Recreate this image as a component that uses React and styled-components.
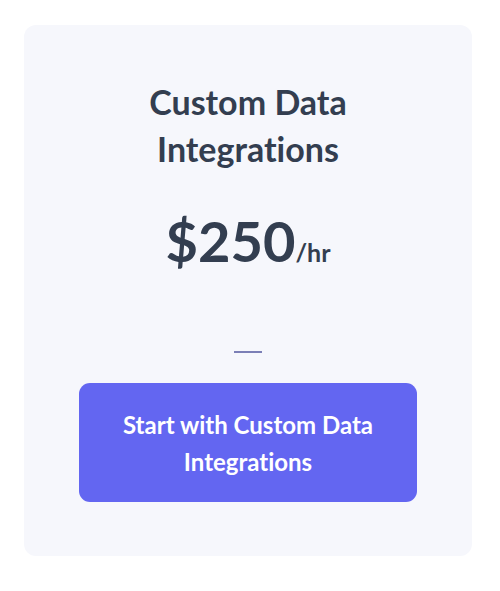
import styled, { createGlobalStyle } from "styled-components";

const Global = createGlobalStyle`
  body {
    margin: 0;
    background: #ffffff;
    font-family: Lato, "Noto Sans", sans-serif;
    font-variant-ligatures: none;
  }
`

const Page = styled.div`
  padding: 25px 28px 35px 24px;
`

const Card = styled.div`
  background: #f6f7fc;
  border-radius: 12px;
  height: 531px;
  box-sizing: border-box;
  padding: 53px 40px 0;
  display: flex;
  flex-direction: column;
  align-items: center;
`

const Title = styled.h2`
  margin: 0;
  font-size: 34px;
  line-height: 47px;
  font-weight: 700;
  color: #333e50;
  text-align: center;
`

const Price = styled.div`
  margin-top: 41px;
  display: flex;
  align-items: baseline;
  color: #333e50;
  font-weight: 700;
  line-height: 1;

  .amount {
    font-size: 56px;
  }
  .unit {
    font-size: 25px;
  }
`

const Dash = styled.div`
  width: 28px;
  height: 2px;
  background: #7b7fb6;
  margin-top: 82px;
`

const Button = styled.button`
  margin-top: 30px;
  width: 338px;
  height: 119px;
  border: none;
  border-radius: 11px;
  background: #6366f1;
  color: #ffffff;
  font-family: inherit;
  font-variant-ligatures: none;
  font-size: 24px;
  font-weight: 700;
  line-height: 37px;
  padding: 0 20px;
  cursor: pointer;
`

export default function App() {
  return (
    <>
      <Global />
      <Page>
        <Card>
          <Title>Custom Data<br />Integrations</Title>
          <Price>
            <span className="amount">$250</span>
            <span className="unit">/hr</span>
          </Price>
          <Dash />
          <Button>Start with Custom Data Integrations</Button>
        </Card>
      </Page>
    </>
  )
}
